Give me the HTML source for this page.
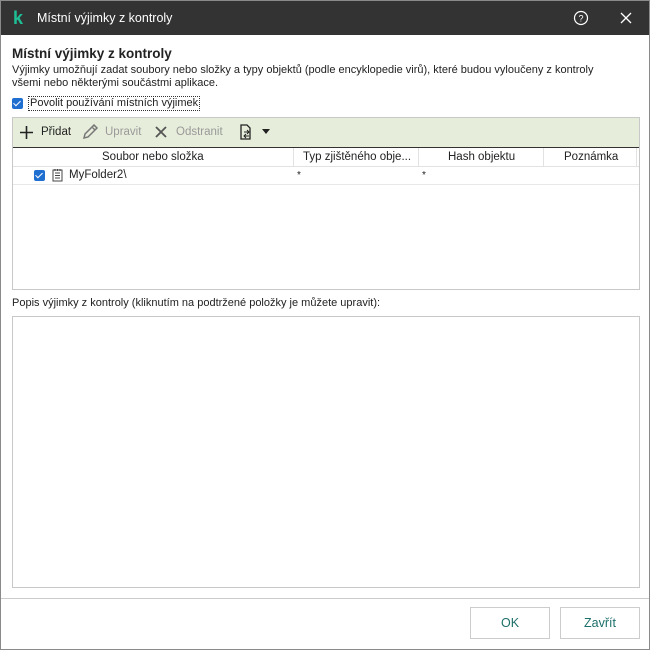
<!DOCTYPE html>
<html><head><meta charset="utf-8"><style>
body{margin:0;width:650px;height:650px;overflow:hidden;font-family:"Liberation Sans",sans-serif;font-size:11.5px;color:#222;background:#fff}
.win{position:absolute;left:0;top:0;width:648px;height:648px;border:1px solid #8a8a8a;background:#fff}
.title{position:absolute;left:0;top:0;width:648px;height:34px;background:#333;color:#fff;font-size:12.5px}
.a{position:absolute;white-space:nowrap}
.cb{position:absolute;width:11px;height:11px;background:#1f6fd0;border-radius:2px}
.cb:after{content:"";position:absolute;left:3px;top:1px;width:3px;height:6px;border:solid #fff;border-width:0 1.5px 1.5px 0;transform:rotate(45deg)}
.btn{position:absolute;top:606px;width:78px;height:30px;border:1px solid #ccc;text-align:center;line-height:30px;color:#1d6f6a;font-size:12.5px}
</style></head><body><div class="win">
<div class="title">
 <div class="a" style="left:12px;top:7px;color:#1fbf96;font-weight:bold;font-size:18px">k</div>
 <div class="a" style="left:36px;top:10px">Místní výjimky z kontroly</div>
 <svg class="a" style="left:572px;top:9px" width="16" height="16"><circle cx="8" cy="8" r="6.5" fill="none" stroke="#fff" stroke-width="1.2"/><text x="8" y="11.5" font-size="9" fill="#fff" text-anchor="middle" font-family="Liberation Sans">?</text></svg>
 <svg class="a" style="left:619px;top:11px" width="12" height="12"><path d="M1 1L11 11M11 1L1 11" stroke="#fff" stroke-width="1.3"/></svg>
</div>
<div class="a" style="left:11px;top:45px;font-size:13.5px;font-weight:bold">Místní výjimky z kontroly</div>
<div class="a" style="left:11px;top:63px;font-size:11px;line-height:13px">Výjimky umožňují zadat soubory nebo složky a typy objektů (podle encyklopedie virů), které budou vyloučeny z kontroly<br>všemi nebo některými součástmi aplikace.</div>
<div class="cb" style="left:11px;top:97px"></div>
<div class="a" style="left:27px;top:95px;border:1px dotted #333;padding:0 1px;line-height:13px;font-size:11px">Povolit používání místních výjimek</div>
<div class="a" style="left:11px;top:116px;width:626px;height:171px;border:1px solid #c8c8c8"></div>
<div class="a" style="left:12px;top:117px;width:626px;height:29px;background:#e6eedb;border-bottom:1px solid #333"></div>
<svg class="a" style="left:18px;top:124px" width="15" height="15"><path d="M7.5 1V14M1 7.5H14" stroke="#222" stroke-width="1.6"/></svg>
<div class="a" style="left:40px;top:125px">Přidat</div>
<svg class="a" style="left:81px;top:123px" width="17" height="16"><path d="M2 14l1-4 9-9 3 3-9 9z M10 3l3 3" fill="none" stroke="#777" stroke-width="1.5"/></svg>
<div class="a" style="left:104px;top:125px;color:#999">Upravit</div>
<svg class="a" style="left:154px;top:125px" width="12" height="12"><path d="M1 1L11 11M11 1L1 11" stroke="#555" stroke-width="1.8"/></svg>
<div class="a" style="left:175px;top:125px;color:#999">Odstranit</div>
<svg class="a" style="left:237px;top:123px" width="14" height="17"><path d="M3 1H9L12 4V15H3Z" fill="none" stroke="#222" stroke-width="1.3"/><path d="M6 8h5M9 6l2 2-2 2M11 12H6M8 10l-2 2 2 2" fill="none" stroke="#222" stroke-width="1"/></svg>
<svg class="a" style="left:261px;top:128px" width="8" height="5"><path d="M0 0H8L4 5Z" fill="#222"/></svg>
<div class="a" style="left:12px;top:147px;width:626px;height:18px;border-bottom:1px solid #e2e2e2"></div>
<div class="a" style="left:101px;top:150px">Soubor nebo složka</div>
<div class="a" style="left:292px;top:147px;width:1px;height:18px;background:#e2e2e2"></div>
<div class="a" style="left:302px;top:150px">Typ zjištěného obje...</div>
<div class="a" style="left:417px;top:147px;width:1px;height:18px;background:#e2e2e2"></div>
<div class="a" style="left:447px;top:150px">Hash objektu</div>
<div class="a" style="left:542px;top:147px;width:1px;height:18px;background:#e2e2e2"></div>
<div class="a" style="left:563px;top:150px">Poznámka</div>
<div class="a" style="left:635px;top:147px;width:1px;height:18px;background:#e2e2e2"></div>
<div class="a" style="left:12px;top:166px;width:626px;height:17px;border-bottom:1px solid #e8e8e8"></div>
<div class="cb" style="left:33px;top:169px"></div>
<svg class="a" style="left:51px;top:167px" width="11" height="14"><rect x="1" y="2" width="9" height="11" fill="#fff" stroke="#444"/><path d="M3 5h5M3 7.5h5M3 10h5M3 1v2M5.5 1v2M8 1v2" stroke="#444"/></svg>
<div class="a" style="left:68px;top:168px">MyFolder2\</div>
<div class="a" style="left:296px;top:169px;font-size:10px">*</div>
<div class="a" style="left:421px;top:169px;font-size:10px">*</div>
<div class="a" style="left:11px;top:296px;font-size:11px">Popis výjimky z kontroly (kliknutím na podtržené položky je můžete upravit):</div>
<div class="a" style="left:11px;top:315px;width:626px;height:270px;border:1px solid #c8c8c8"></div>
<div class="a" style="left:0;top:597px;width:648px;height:1px;background:#ccc"></div>
<div class="btn" style="left:469px">OK</div>
<div class="btn" style="left:559px">Zavřít</div>
</div></body></html>
